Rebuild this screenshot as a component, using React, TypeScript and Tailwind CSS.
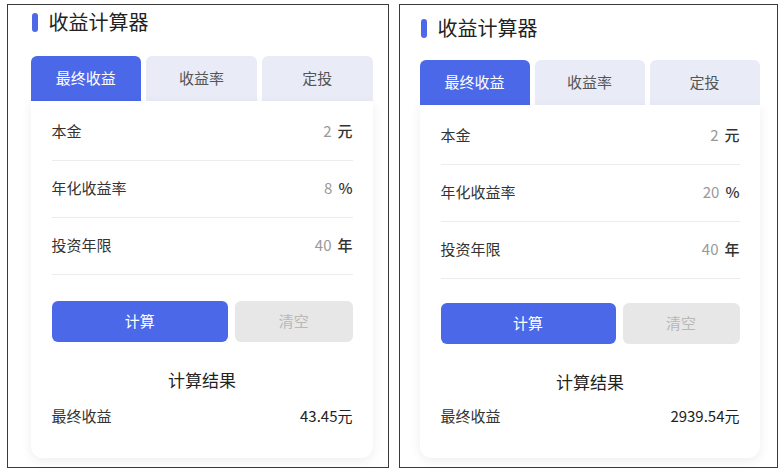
import React from "react";

type PanelProps = {
  rate: string;
  result: string;
  panelCls: string;
  titleCls: string;
  tabsCls: string;
  btnCls: string;
  resCls: string;
};

const FONT = { fontFamily: '"Noto Sans CJK SC", "Noto Sans", sans-serif' };

function Row({ label, value, unit }: { label: string; value: string; unit: string }) {
  return (
    <div className="h-[56px] border-b border-[#ececec] flex items-center justify-between box-content">
      <span className="text-[15px] text-[#333]">{label}</span>
      <span className="flex items-center gap-[6px] text-[15px]">
        <span className="text-[#999]">{value}</span>
        <span className="text-[#333] font-medium">{unit}</span>
      </span>
    </div>
  );
}

function Panel({ rate, result, panelCls, titleCls, tabsCls, btnCls, resCls }: PanelProps) {
  return (
    <div className={"h-[464px] border-[1.5px] border-[#3a3a3a] bg-white flex flex-col " + panelCls}>
      <div className={"h-[28px] flex items-center gap-[11px] ml-[1px] " + titleCls}>
        <div className="w-[6px] h-[19px] rounded-full bg-[#4d69e6]" />
        <span className="text-[20px] text-[#222] leading-none">收益计算器</span>
      </div>
      <div className={"flex gap-[5px] h-[45px] " + tabsCls}>
        <div className="flex-1 rounded-t-[6px] bg-[#4b68e8] text-white text-[15px] flex items-center justify-center">
          最终收益
        </div>
        <div className="flex-1 rounded-t-[6px] bg-[#e9ecf6] text-[#555] text-[15px] flex items-center justify-center">
          收益率
        </div>
        <div className="flex-1 rounded-t-[6px] bg-[#e9ecf6] text-[#555] text-[15px] flex items-center justify-center">
          定投
        </div>
      </div>
      <div className="bg-white rounded-b-[12px] shadow-[0_3px_12px_rgba(0,0,0,0.07)] pl-[21px] pr-[20px] pt-[3px] pb-[30px] flex flex-col">
        <Row label="本金" value="2" unit="元" />
        <Row label="年化收益率" value={rate} unit="%" />
        <Row label="投资年限" value="40" unit="年" />
        <div className={"flex gap-[7px] h-[41px] " + btnCls}>
          <div className="flex-[3] rounded-[6px] bg-[#4b68e8] text-white text-[15px] flex items-center justify-center">
            计算
          </div>
          <div className="flex-[2] rounded-[6px] bg-[#e7e7e7] text-[#b8b8b8] text-[15px] flex items-center justify-center">
            清空
          </div>
        </div>
        <div className="mt-[26px] h-[24px] leading-[24px] text-center text-[17px] text-[#222]">计算结果</div>
        <div className={"h-[22px] flex items-center justify-between text-[15px] " + resCls}>
          <span className="text-[#333]">最终收益</span>
          <span className="text-[#222]">{result}</span>
        </div>
      </div>
    </div>
  );
}

export default function App() {
  return (
    <div className="w-[784px] h-[475px] bg-white overflow-hidden" style={FONT}>
      <div className="flex pt-[4px] pl-[7px] gap-[10px]">
        <Panel
          rate="8"
          result="43.45元"
          panelCls="w-[382px] pl-[22.5px] pr-[15.5px]"
          titleCls="mt-[3px]"
          tabsCls="mt-[19.5px]"
          btnCls="mt-[26px]"
          resCls="mt-[14px]"
        />
        <Panel
          rate="20"
          result="2939.54元"
          panelCls="w-[379px] pl-[19.5px] pr-[17.5px]"
          titleCls="mt-[9px]"
          tabsCls="mt-[17.5px]"
          btnCls="mt-[24px]"
          resCls="mt-[12px]"
        />
      </div>
    </div>
  );
}
